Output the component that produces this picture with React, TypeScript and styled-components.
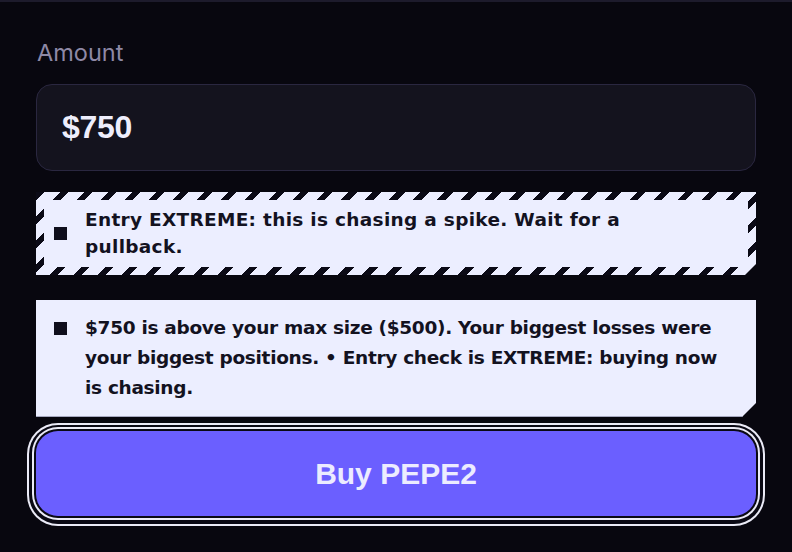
import React from "react";
import styled, { createGlobalStyle } from "styled-components";

const Global = createGlobalStyle`
  html, body { margin: 0; padding: 0; background: #08070f; }
  * { box-sizing: border-box; }
`;

const Page = styled.div`
  min-height: 552px;
  background: #08070f;
  border-top: 2px solid #1d1b2c;
  padding: 38px 36px 0;
  display: flex;
  flex-direction: column;
  font-family: Inter, "Liberation Sans", sans-serif;
`;

const Label = styled.label`
  font-size: 23.5px;
  line-height: 26px;
  color: #8e89a6;
  padding-left: 1px;
`;

const AmountBox = styled.div`
  margin-top: 18px;
  height: 87px;
  border: 1px solid #2a2740;
  border-radius: 16px;
  background: #14131e;
  display: flex;
  align-items: center;
  padding-left: 25px;
  font-family: "Liberation Sans", Arial, sans-serif;
  font-weight: 700;
  font-size: 32px;
  letter-spacing: -0.3px;
  color: #eeeefc;
`;

const Notice = styled.div<{ $hazard?: boolean; $gap: number }>`
  margin-top: ${(p) => p.$gap}px;
  display: flex;
  align-items: ${(p) => (p.$hazard ? "center" : "flex-start")};
  gap: 18px;
  color: #13121f;
  font-family: "DejaVu Sans", Inter, sans-serif;
  font-weight: 700;
  font-size: 18.5px;
  letter-spacing: ${(p) => (p.$hazard ? 0.3 : -0.3)}px;
  line-height: ${(p) => (p.$hazard ? 27 : 30)}px;
  ${(p) =>
    p.$hazard
      ? `
    border: 8px solid transparent;
    background:
      linear-gradient(#eceeff, #eceeff) padding-box,
      repeating-linear-gradient(135deg, #0b0a16 0 6px, #eceeff 6px 17px) border-box;
    padding: 6px 60px 7px 10px;
    clip-path: polygon(0 0, 100% 0, 100% calc(100% - 11px), calc(100% - 11px) 100%, 0 100%);
  `
      : `
    background: #eceeff;
    border-bottom: 1px solid #a6a8bf;
    padding: 13px 24px 13px 18px;
    clip-path: polygon(0 0, 100% 0, 100% calc(100% - 14px), calc(100% - 14px) 100%, 0 100%);
  `}
`;

const Bullet = styled.span<{ $top?: number }>`
  flex: none;
  width: 13px;
  height: 13px;
  background: #0f0e1c;
  margin-top: ${(p) => p.$top ?? 0}px;
`;

const Text = styled.span`
  flex: 1;
`;

const BuyButton = styled.button`
  margin-top: 14px;
  height: 85px;
  border: none;
  border-radius: 22px;
  background: #6b5fff;
  color: #ececff;
  font-family: "Liberation Sans", Arial, sans-serif;
  font-weight: 700;
  font-size: 30px;
  cursor: pointer;
  box-shadow:
    0 0 0 2px #0a0914,
    0 0 0 4px #ebebf7,
    0 1px 0 7px #0a0914,
    0 1px 0 9px #ebebf7;
`;

export default function App() {
  return (
    <>
      <Global />
      <Page>
        <Label>Amount</Label>
        <AmountBox>$750</AmountBox>
        <Notice $hazard $gap={21}>
          <Bullet />
          <Text>Entry EXTREME: this is chasing a spike. Wait for a pullback.</Text>
        </Notice>
        <Notice $gap={25}>
          <Bullet $top={9} />
          <Text>
            $750 is above your max size ($500). Your biggest losses were your biggest positions. • Entry
            check is EXTREME: buying now is chasing.
          </Text>
        </Notice>
        <BuyButton>Buy PEPE2</BuyButton>
      </Page>
    </>
  );
}
